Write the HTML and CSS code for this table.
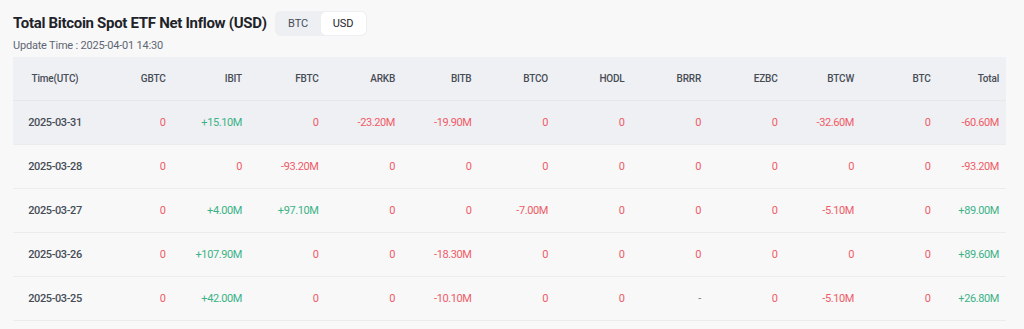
FILE: index.html
```html
<!DOCTYPE html>
<html lang="en">
<head>
<meta charset="utf-8">
<title>Total Bitcoin Spot ETF Net Inflow (USD)</title>
<link rel="stylesheet" href="styles.css">
</head>
<body>
<div class="page">
  <div class="head">
    <div class="title-row">
      <h1 class="title">Total Bitcoin Spot ETF Net Inflow (USD)</h1>
      <div class="toggle">
        <span class="seg">BTC</span>
        <span class="seg active">USD</span>
      </div>
    </div>
    <div class="update">Update Time : 2025-04-01 14:30</div>
  </div>
  <table class="grid">
    <colgroup>
      <col class="c-time"><col class="c"><col class="c"><col class="c"><col class="c"><col class="c"><col class="c"><col class="c"><col class="c"><col class="c"><col class="c"><col class="c"><col class="c-last">
    </colgroup>
    <thead>
      <tr>
        <th class="time">Time(UTC)</th><th>GBTC</th><th>IBIT</th><th>FBTC</th><th>ARKB</th><th>BITB</th><th>BTCO</th><th>HODL</th><th>BRRR</th><th>EZBC</th><th>BTCW</th><th>BTC</th><th class="last">Total</th>
      </tr>
    </thead>
    <tbody>
      <tr class="hover">
        <td class="time">2025-03-31</td><td class="neg">0</td><td class="pos">+15.10M</td><td class="neg">0</td><td class="neg">-23.20M</td><td class="neg">-19.90M</td><td class="neg">0</td><td class="neg">0</td><td class="neg">0</td><td class="neg">0</td><td class="neg">-32.60M</td><td class="neg">0</td><td class="neg last">-60.60M</td>
      </tr>
      <tr>
        <td class="time">2025-03-28</td><td class="neg">0</td><td class="neg">0</td><td class="neg">-93.20M</td><td class="neg">0</td><td class="neg">0</td><td class="neg">0</td><td class="neg">0</td><td class="neg">0</td><td class="neg">0</td><td class="neg">0</td><td class="neg">0</td><td class="neg last">-93.20M</td>
      </tr>
      <tr>
        <td class="time">2025-03-27</td><td class="neg">0</td><td class="pos">+4.00M</td><td class="pos">+97.10M</td><td class="neg">0</td><td class="neg">0</td><td class="neg">-7.00M</td><td class="neg">0</td><td class="neg">0</td><td class="neg">0</td><td class="neg">-5.10M</td><td class="neg">0</td><td class="pos last">+89.00M</td>
      </tr>
      <tr>
        <td class="time">2025-03-26</td><td class="neg">0</td><td class="pos">+107.90M</td><td class="neg">0</td><td class="neg">0</td><td class="neg">-18.30M</td><td class="neg">0</td><td class="neg">0</td><td class="neg">0</td><td class="neg">0</td><td class="neg">0</td><td class="neg">0</td><td class="pos last">+89.60M</td>
      </tr>
      <tr>
        <td class="time">2025-03-25</td><td class="neg">0</td><td class="pos">+42.00M</td><td class="neg">0</td><td class="neg">0</td><td class="neg">-10.10M</td><td class="neg">0</td><td class="neg">0</td><td class="na">-</td><td class="neg">0</td><td class="neg">-5.10M</td><td class="neg">0</td><td class="pos last">+26.80M</td>
      </tr>
    </tbody>
  </table>
</div>
</body>
</html>
```

FILE: styles.css
```css
* { box-sizing: border-box; }
html, body {
  margin: 0;
  padding: 0;
  background: #f8f8f8;
}
body {
  font-family: "Roboto", "Liberation Sans", sans-serif;
  color: #1e2329;
}
.page {
  padding: 11px 18px 0 13px;
}
.title-row {
  display: flex;
  align-items: center;
  gap: 8px;
}
.title {
  margin: 0;
  font-size: 15px;
  font-weight: 700;
  letter-spacing: -0.3px;
  color: #1e2329;
  line-height: 25px;
  white-space: nowrap;
}
.toggle {
  display: flex;
  height: 25px;
  padding: 1px;
  background: #eeeff2;
  border-radius: 6px;
}
.seg {
  display: flex;
  align-items: center;
  justify-content: center;
  width: 45px;
  font-size: 11px;
  color: #474d57;
  border-radius: 5px;
}
.seg.active {
  background: #ffffff;
  color: #1e2329;
}
.update {
  margin-top: 2px;
  font-size: 11px;
  letter-spacing: -0.2px;
  color: #5e6673;
  line-height: 16px;
}
.grid {
  margin-top: 3px;
  width: 993px;
  border-collapse: collapse;
  table-layout: fixed;
}
.c-time { width: 76px; }
.c { width: 76.5px; }
.c-last { width: 75.5px; }
thead tr {
  background: #eff0f3;
}
th {
  height: 43px;
  font-size: 10px;
  font-weight: 500;
  letter-spacing: -0.2px;
  color: #474d57;
  text-align: right;
  padding: 0;
  border-bottom: 1px solid #e6e8ea;
  white-space: nowrap;
}
td {
  height: 44px;
  font-size: 11px;
  letter-spacing: -0.4px;
  text-align: right;
  padding: 0;
  border-bottom: 1px solid #ececee;
  white-space: nowrap;
}
th.time, td.time {
  text-align: center;
  padding-left: 8px;
}
td.time {
  color: #474d57;
  font-weight: 500;
}
.last { padding-right: 7px; }
tr.hover { background: #eff0f3; }
.neg { color: #ef5b67; }
.pos { color: #3bb287; }
.na { color: #707a8a; }
```
